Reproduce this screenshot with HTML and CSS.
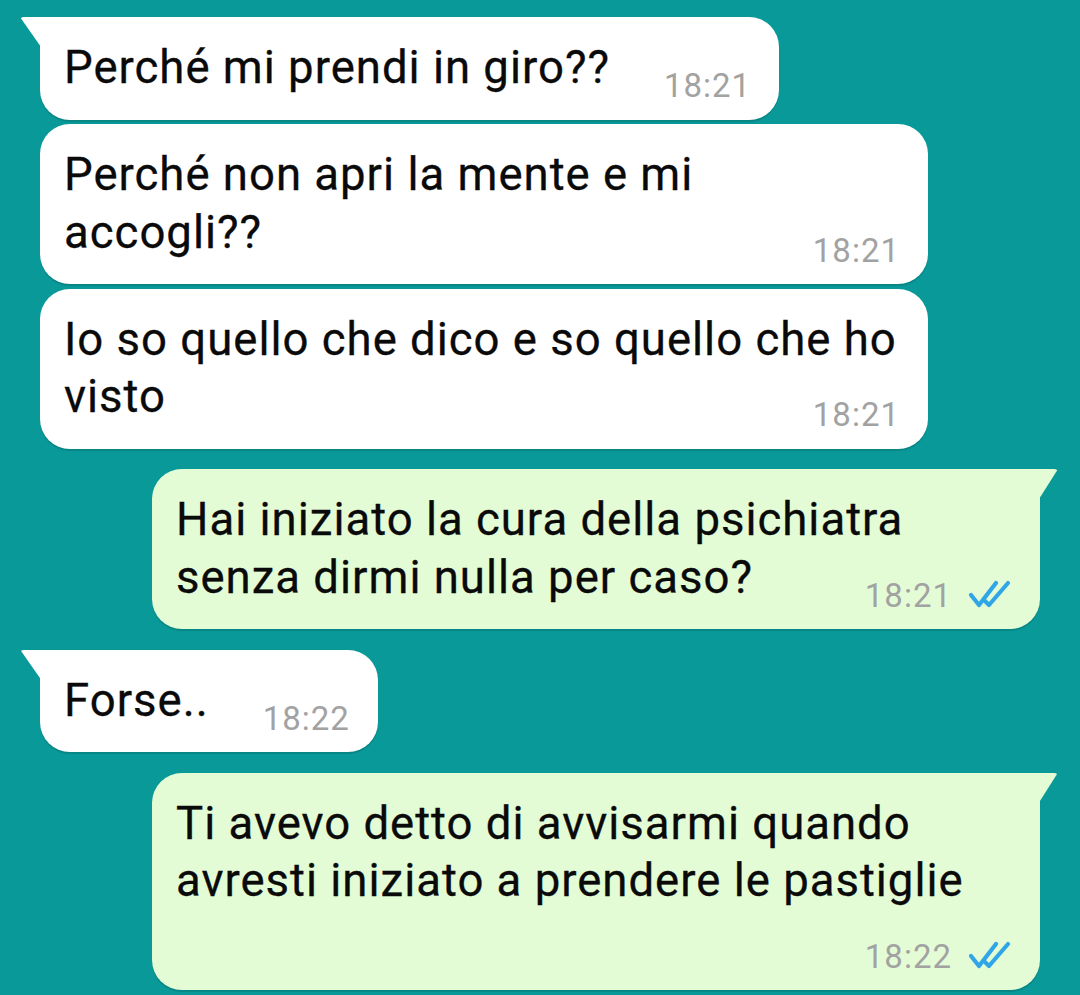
FILE: index.html
```html
<!DOCTYPE html>
<html lang="it">
<head>
<meta charset="utf-8">
<title>Chat</title>
<link rel="stylesheet" href="styles.css">
</head>
<body>
<div class="chat">
  <div class="msg in first"><span class="text">Perché mi prendi in giro??</span><span class="meta"><span class="time">18:21</span></span></div>
  <div class="msg in cont"><span class="text">Perché non apri la mente e mi accogli??</span><span class="meta"><span class="time">18:21</span></span></div>
  <div class="msg in cont"><span class="text">Io so quello che dico e so quello che ho visto</span><span class="meta"><span class="time">18:21</span></span></div>
  <div class="msg out first"><span class="text">Hai iniziato la cura della psichiatra senza dirmi nulla per caso?</span><span class="meta"><span class="time">18:21</span><svg class="ticks" viewBox="0 0 44 28" width="44" height="28"><polyline points="3,15 11,25 28,3"/><polyline points="17,21 21,25 40,3"/></svg></span></div>
  <div class="msg in first"><span class="text">Forse..</span><span class="meta"><span class="time">18:22</span></span></div>
  <div class="msg out first"><span class="text">Ti avevo detto di avvisarmi quando avresti iniziato a prendere le pastiglie</span><span class="meta"><span class="time">18:22</span><svg class="ticks" viewBox="0 0 44 28" width="44" height="28"><polyline points="3,15 11,25 28,3"/><polyline points="17,21 21,25 40,3"/></svg></span></div>
</div>
</body>
</html>
```

FILE: styles.css
```css
html, body {
  margin: 0;
  padding: 0;
}

body {
  background: #0a9999;
  font-family: Roboto, "Noto Sans", sans-serif;
  width: 1080px;
  height: 995px;
  overflow: hidden;
}

.chat {
  display: flex;
  flex-direction: column;
  align-items: flex-start;
  padding: 17px 40px 0;
}

.msg {
  position: relative;
  display: flow-root;
  box-sizing: border-box;
  max-width: 888px;
  padding: 22px 28px 23px 24px;
  border-radius: 30px;
  background: #ffffff;
  color: #0a0a0a;
  font-size: 45.5px;
  letter-spacing: 1px;
  line-height: 57.5px;
  box-shadow: 0 2px 1px rgba(0, 0, 0, 0.13);
}

.text {
  -webkit-text-stroke: 0.3px #0a0a0a;
}

.msg.out {
  align-self: flex-end;
  background: #e4fcd6;
}

.msg.cont {
  margin-top: 4.5px;
}

.msg.first {
  margin-top: 20.5px;
}

.msg:first-child {
  margin-top: 0;
}

.msg.in.first {
  border-top-left-radius: 0;
}

.msg.out.first {
  border-top-right-radius: 0;
}

.msg.in.first::before {
  content: "";
  position: absolute;
  left: -20px;
  top: 0;
  width: 21px;
  height: 30px;
  background: inherit;
  border-top-left-radius: 4px;
  clip-path: polygon(0 0, 100% 0, 100% 100%);
}

.msg.out.first::before {
  content: "";
  position: absolute;
  right: -18px;
  top: 0;
  width: 19px;
  height: 30px;
  background: inherit;
  border-top-right-radius: 4px;
  clip-path: polygon(0 0, 100% 0, 0 100%);
}

.meta {
  float: right;
  display: flex;
  align-items: flex-start;
  gap: 16px;
  height: 38px;
  margin: 28px 0 -8.5px 54px;
  font-size: 33px;
  letter-spacing: 1px;
  line-height: 38px;
  color: #a2a2a2;
}

.ticks {
  display: block;
  margin-top: 3px;
  fill: none;
  stroke: #31a6e6;
  stroke-width: 4.2;
  stroke-linecap: round;
  stroke-linejoin: round;
}
```
